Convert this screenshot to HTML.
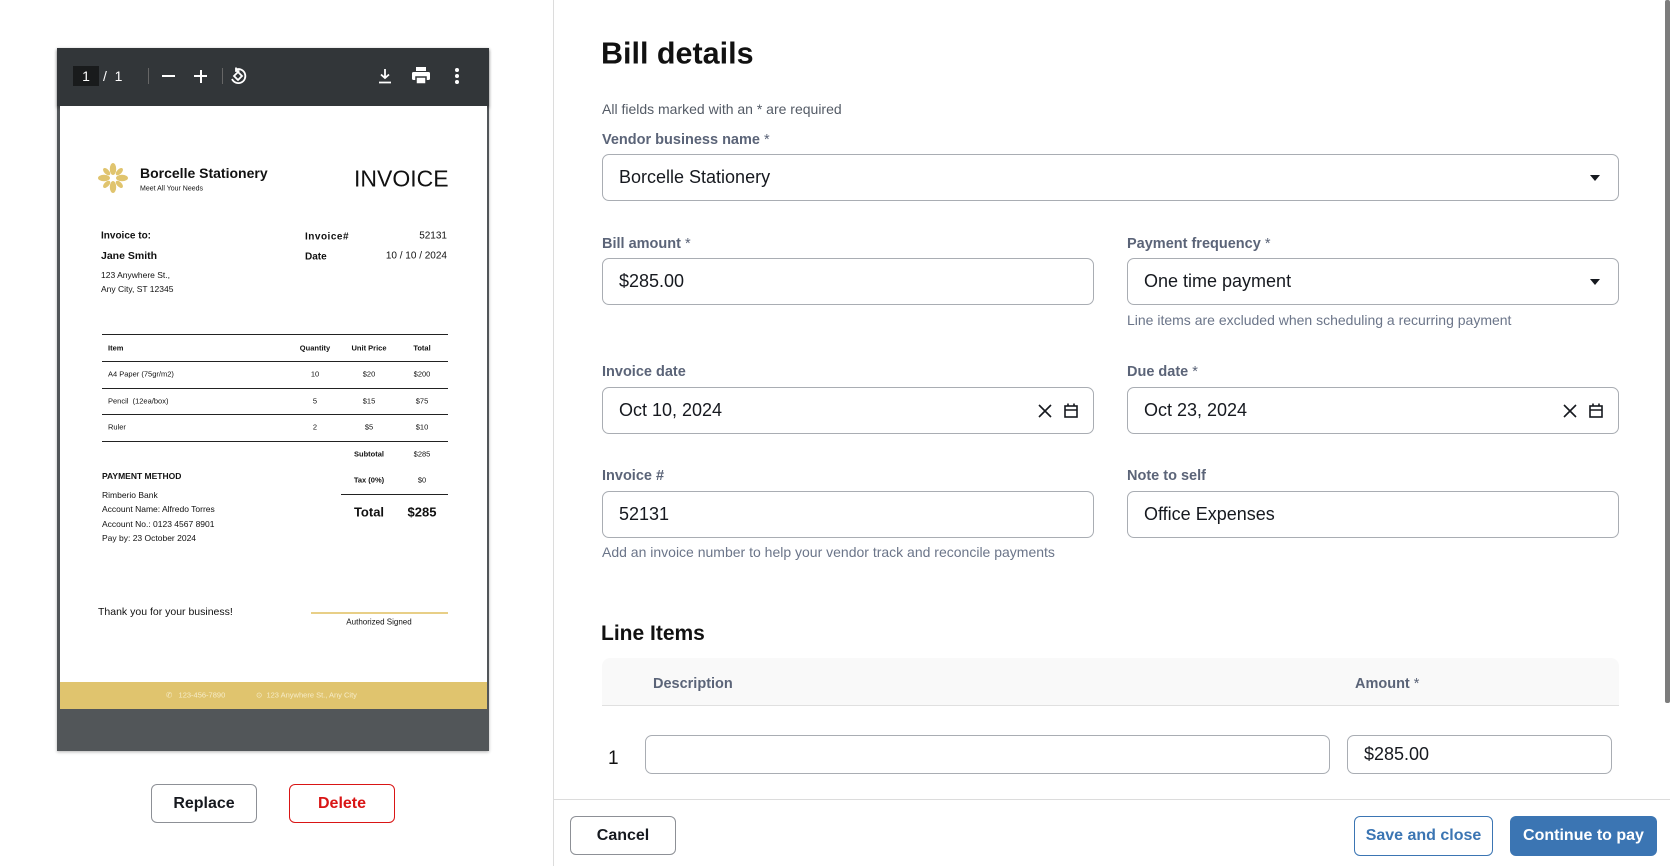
<!DOCTYPE html>
<html><head><meta charset="utf-8"><style>
*{box-sizing:border-box;margin:0;padding:0}
body{width:1670px;height:866px;overflow:hidden;background:#fff;font-family:"Liberation Sans",sans-serif;position:relative;color:#16191f}
.a{position:absolute}
.lbl{position:absolute;font-size:14.5px;font-weight:bold;color:#5b6478;transform:translateY(-50%)}
.lbl span{font-weight:normal}
.inp{position:absolute;border:1px solid #a9adb3;border-radius:7px;background:#fff;font-size:18px;padding-left:16px;display:flex;align-items:center}
.hint{position:absolute;font-size:14px;color:#6b7589;transform:translateY(-50%)}
.p{position:absolute;white-space:nowrap;color:#111;transform:translateY(-50%)}
.c{transform:translate(-50%,-50%)}
.ln{position:absolute;background:#222;height:1.3px}
.btn{position:absolute;border-radius:6px;font-weight:bold;font-size:16px;display:flex;align-items:center;justify-content:center}
</style></head><body>

<div class="a" style="left:57px;top:48px;width:432px;height:703px;background:#525659;box-shadow:0 1px 3px rgba(0,0,0,.3)"></div>
<div class="a" style="left:57px;top:48px;width:432px;height:58px;background:#323639;box-shadow:0 2px 3px rgba(0,0,0,.35)"></div>
<div class="a" style="left:73px;top:66px;width:26px;height:20px;background:#191b1c;color:#fff;font-size:14px;text-align:center;line-height:20px">1</div>
<div class="a" style="left:103px;top:66px;color:#fff;font-size:14px;line-height:20px">/&nbsp;&nbsp;1</div>
<div class="a" style="left:148px;top:68px;width:1px;height:16px;background:#666"></div>
<div class="a" style="left:162px;top:75px;width:13px;height:2px;background:#fff"></div>
<div class="a" style="left:194px;top:75px;width:13px;height:2px;background:#fff"></div>
<div class="a" style="left:199.5px;top:69.5px;width:2px;height:13px;background:#fff"></div>
<div class="a" style="left:222px;top:68px;width:1px;height:16px;background:#666"></div>
<svg class="a" style="left:229px;top:67px" width="18" height="18" viewBox="0 0 18 18" fill="none" stroke="#fff" stroke-width="1.8"><path d="M5 9 L9 5 L13 9 L9 13 Z"/><path d="M7 2.5 A7 7 0 1 1 3 12"/><path d="M7 0.5 L7 4 L10.5 4"/></svg>
<svg class="a" style="left:377px;top:67px" width="16" height="18" viewBox="0 0 16 18" fill="none" stroke="#fff" stroke-width="1.8"><path d="M8 2 V11 M4 7.5 L8 11 L12 7.5 M2 15.5 H14"/></svg>
<svg class="a" style="left:412px;top:67px" width="18" height="17" viewBox="0 0 18 17"><rect x="4" y="0" width="10" height="4" fill="#fff"/><rect x="0" y="5" width="18" height="8" rx="1.5" fill="#fff"/><rect x="4" y="10" width="10" height="7" fill="#fff" stroke="#323639" stroke-width="1.5"/></svg>
<div class="a" style="left:455px;top:68px;width:4px;height:4px;border-radius:2px;background:#fff;box-shadow:0 6px 0 #fff,0 12px 0 #fff"></div>

<div class="a" style="left:60px;top:106px;width:427px;height:603px;background:#fff"></div>
<svg class="a" style="left:97px;top:162px" width="32" height="32" viewBox="-16 -16 32 32" fill="#e0c46e"><g><ellipse cx="0" cy="-9" rx="3.2" ry="6"/><ellipse cx="0" cy="9" rx="3.2" ry="6"/><ellipse cx="-9" cy="0" rx="6" ry="3.2"/><ellipse cx="9" cy="0" rx="6" ry="3.2"/><g transform="rotate(45)"><ellipse cx="0" cy="-9" rx="2.4" ry="4.5"/><ellipse cx="0" cy="9" rx="2.4" ry="4.5"/><ellipse cx="-9" cy="0" rx="4.5" ry="2.4"/><ellipse cx="9" cy="0" rx="4.5" ry="2.4"/></g></g></svg>
<div class="p" style="left:140px;top:173px;font-size:14px;font-weight:bold">Borcelle Stationery</div>
<div class="p" style="left:140px;top:189px;font-size:7px">Meet All Your Needs</div>
<div class="p" style="left:354px;top:179px;font-size:23px">INVOICE</div>
<div class="p" style="left:101px;top:236px;font-size:10px;font-weight:bold">Invoice to:</div>
<div class="p" style="left:101px;top:256px;font-size:10.5px;font-weight:bold">Jane Smith</div>
<div class="p" style="left:101px;top:275px;font-size:8.5px">123 Anywhere St.,</div>
<div class="p" style="left:101px;top:289px;font-size:8.5px">Any City, ST 12345</div>
<div class="p" style="left:305px;top:237px;font-size:10px;font-weight:bold;letter-spacing:.5px">Invoice#</div>
<div class="p" style="left:305px;top:257px;font-size:10px;font-weight:bold">Date</div>
<div class="p" style="right:1223px;top:236px;font-size:10px">52131</div>
<div class="p" style="right:1223px;top:256px;font-size:10px">10 / 10 / 2024</div>

<div class="ln" style="left:102px;top:334px;width:346px"></div>
<div class="ln" style="left:102px;top:361px;width:346px"></div>
<div class="ln" style="left:102px;top:388px;width:346px"></div>
<div class="ln" style="left:102px;top:414px;width:346px"></div>
<div class="ln" style="left:102px;top:441px;width:346px"></div>
<div class="ln" style="left:341px;top:494px;width:107px"></div>
<div class="p" style="left:108px;top:348px;font-size:7.5px;font-weight:bold">Item</div>
<div class="p c" style="left:315px;top:348px;font-size:7.5px;font-weight:bold">Quantity</div>
<div class="p c" style="left:369px;top:348px;font-size:7.5px;font-weight:bold">Unit Price</div>
<div class="p c" style="left:422px;top:348px;font-size:7.5px;font-weight:bold">Total</div>
<div class="p" style="left:108px;top:374px;font-size:7.5px">A4 Paper (75gr/m2)</div>
<div class="p c" style="left:315px;top:374px;font-size:7.5px">10</div>
<div class="p c" style="left:369px;top:374px;font-size:7.5px">$20</div>
<div class="p c" style="left:422px;top:374px;font-size:7.5px">$200</div>
<div class="p" style="left:108px;top:401px;font-size:7.5px">Pencil &nbsp;(12ea/box)</div>
<div class="p c" style="left:315px;top:401px;font-size:7.5px">5</div>
<div class="p c" style="left:369px;top:401px;font-size:7.5px">$15</div>
<div class="p c" style="left:422px;top:401px;font-size:7.5px">$75</div>
<div class="p" style="left:108px;top:427px;font-size:7.5px">Ruler</div>
<div class="p c" style="left:315px;top:427px;font-size:7.5px">2</div>
<div class="p c" style="left:369px;top:427px;font-size:7.5px">$5</div>
<div class="p c" style="left:422px;top:427px;font-size:7.5px">$10</div>
<div class="p c" style="left:369px;top:454px;font-size:7.5px;font-weight:bold">Subtotal</div>
<div class="p c" style="left:422px;top:454px;font-size:7.5px">$285</div>
<div class="p c" style="left:369px;top:480px;font-size:7.5px;font-weight:bold">Tax (0%)</div>
<div class="p c" style="left:422px;top:480px;font-size:7.5px">$0</div>
<div class="p c" style="left:369px;top:512px;font-size:13px;font-weight:bold">Total</div>
<div class="p c" style="left:422px;top:512px;font-size:13px;font-weight:bold">$285</div>
<div class="p" style="left:102px;top:476px;font-size:8.5px;font-weight:bold">PAYMENT METHOD</div>
<div class="p" style="left:102px;top:495px;font-size:8.5px">Rimberio Bank</div>
<div class="p" style="left:102px;top:509px;font-size:8.5px">Account Name: Alfredo Torres</div>
<div class="p" style="left:102px;top:524px;font-size:8.5px">Account No.: 0123 4567 8901</div>
<div class="p" style="left:102px;top:538px;font-size:8.5px">Pay by: 23 October 2024</div>
<div class="p" style="left:98px;top:612px;font-size:10.5px">Thank you for your business!</div>
<div class="a" style="left:311px;top:612px;width:137px;height:1.5px;background:#e8cf87"></div>
<div class="p c" style="left:379px;top:622px;font-size:8px">Authorized Signed</div>
<div class="a" style="left:60px;top:682px;width:427px;height:27px;background:#e0c46e"></div>
<div class="p" style="left:166px;top:695px;font-size:7.5px;color:#f6ecc8">✆&nbsp;&nbsp; 123-456-7890</div>
<div class="p" style="left:256px;top:695px;font-size:7.5px;color:#f6ecc8">⊙&nbsp; 123 Anywhere St., Any City</div>

<div class="btn" style="left:151px;top:784px;width:106px;height:39px;border:1px solid #8d9096;color:#16191f">Replace</div>
<div class="btn" style="left:289px;top:784px;width:106px;height:39px;border:1px solid #d91515;color:#d91515">Delete</div>

<div class="a" style="left:553px;top:0;width:1px;height:866px;background:#dcdcdc"></div>
<div class="a" style="left:1665px;top:0;width:5px;height:703px;background:#7c7c7c;border-radius:2px"></div>

<div class="p" style="left:601px;top:54px;font-size:30.5px;font-weight:bold">Bill details</div>
<div class="hint" style="left:602px;top:109px;color:#545b66">All fields marked with an * are required</div>
<div class="lbl" style="left:602px;top:140px">Vendor business name <span>*</span></div>
<div class="inp" style="left:602px;top:154px;width:1017px;height:47px">Borcelle Stationery</div>
<div class="a" style="left:1590px;top:175px;border-left:5px solid transparent;border-right:5px solid transparent;border-top:6px solid #16191f"></div>

<div class="lbl" style="left:602px;top:244px">Bill amount <span>*</span></div>
<div class="inp" style="left:602px;top:258px;width:492px;height:47px">$285.00</div>
<div class="lbl" style="left:1127px;top:244px">Payment frequency <span>*</span></div>
<div class="inp" style="left:1127px;top:258px;width:492px;height:47px">One time payment</div>
<div class="a" style="left:1590px;top:279px;border-left:5px solid transparent;border-right:5px solid transparent;border-top:6px solid #16191f"></div>
<div class="hint" style="left:1127px;top:320px">Line items are excluded when scheduling a recurring payment</div>

<div class="lbl" style="left:602px;top:372px">Invoice date</div>
<div class="inp" style="left:602px;top:387px;width:492px;height:47px">Oct 10, 2024</div>
<div class="lbl" style="left:1127px;top:372px">Due date <span>*</span></div>
<div class="inp" style="left:1127px;top:387px;width:492px;height:47px">Oct 23, 2024</div>
<svg class="a" style="left:1038px;top:404px" width="14" height="14" viewBox="0 0 14 14" stroke="#16191f" stroke-width="1.6"><path d="M1 1 L13 13 M13 1 L1 13"/></svg>
<svg class="a" style="left:1064px;top:403px" width="14" height="15" viewBox="0 0 14 15" fill="none" stroke="#16191f" stroke-width="1.6"><rect x="1" y="3" width="12" height="11"/><path d="M1 7 H13 M4 0.5 V3 M10 0.5 V3"/></svg>
<svg class="a" style="left:1563px;top:404px" width="14" height="14" viewBox="0 0 14 14" stroke="#16191f" stroke-width="1.6"><path d="M1 1 L13 13 M13 1 L1 13"/></svg>
<svg class="a" style="left:1589px;top:403px" width="14" height="15" viewBox="0 0 14 15" fill="none" stroke="#16191f" stroke-width="1.6"><rect x="1" y="3" width="12" height="11"/><path d="M1 7 H13 M4 0.5 V3 M10 0.5 V3"/></svg>

<div class="lbl" style="left:602px;top:476px">Invoice #</div>
<div class="inp" style="left:602px;top:491px;width:492px;height:47px">52131</div>
<div class="lbl" style="left:1127px;top:476px">Note to self</div>
<div class="inp" style="left:1127px;top:491px;width:492px;height:47px">Office Expenses</div>
<div class="hint" style="left:602px;top:552px">Add an invoice number to help your vendor track and reconcile payments</div>

<div class="p" style="left:601px;top:634px;font-size:21px;font-weight:bold">Line Items</div>
<div class="a" style="left:602px;top:658px;width:1017px;height:48px;background:#f9f9f9;border-bottom:1px solid #e0e0e0;border-radius:8px 8px 0 0"></div>
<div class="lbl" style="left:653px;top:684px">Description</div>
<div class="lbl" style="left:1355px;top:684px">Amount <span>*</span></div>
<div class="p" style="left:608px;top:759px;font-size:19px">1</div>
<div class="inp" style="left:645px;top:735px;width:685px;height:39px"></div>
<div class="inp" style="left:1347px;top:735px;width:265px;height:39px">$285.00</div>

<div class="a" style="left:554px;top:799px;width:1116px;height:1px;background:#dcdcdc"></div>
<div class="btn" style="left:570px;top:816px;width:106px;height:39px;border:1px solid #8d9096;color:#16191f">Cancel</div>
<div class="btn" style="left:1354px;top:816px;width:139px;height:40px;border:1px solid #3b75b3;color:#3b75b3">Save and close</div>
<div class="btn" style="left:1510px;top:816px;width:147px;height:40px;background:#3b75b3;color:#fff">Continue to pay</div>
</body></html>
